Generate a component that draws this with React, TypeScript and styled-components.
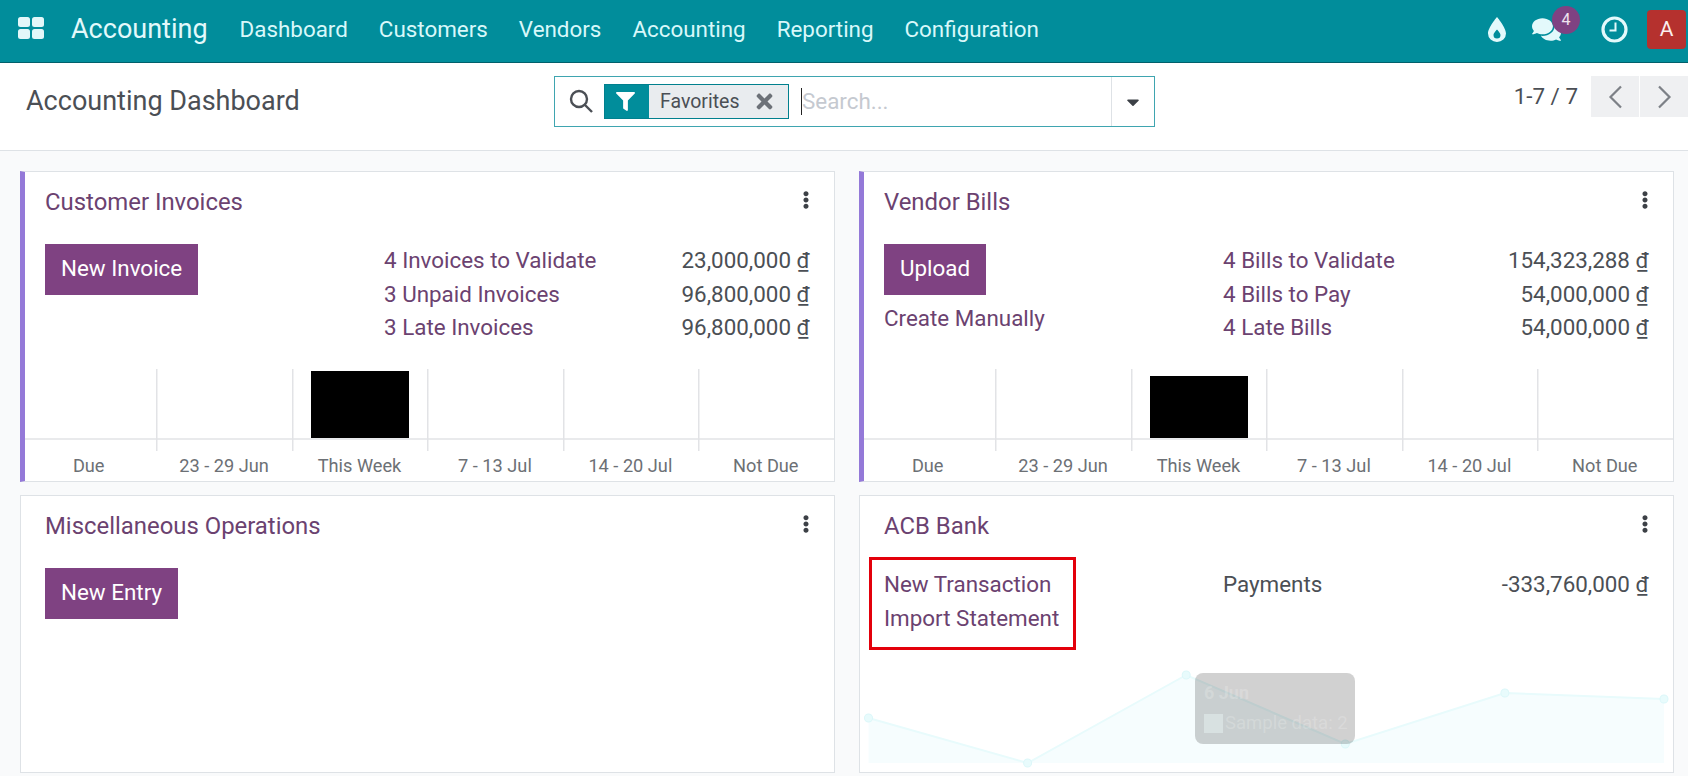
import React from "react";
import styled, { createGlobalStyle } from "styled-components";
import { FaComments, FaEllipsisV, FaFilter, FaTimes, FaCaretDown } from "react-icons/fa";

const GlobalStyle = createGlobalStyle`
  html, body {
    margin: 0;
    padding: 0;
    height: 776px;
    overflow: hidden;
    background: #f9fafb;
    font-family: Roboto, "Liberation Sans", sans-serif;
  }
  * { box-sizing: border-box; }
`;

const TopBar = styled.header`
  height: 63px;
  background: #018d9b;
  border-bottom: 1px solid #01606b;
  display: flex;
  align-items: center;
  padding: 0 2px 4px 18px;
`;

const AppsIcon = styled.svg`
  width: 26px;
  height: 22px;
  margin-right: 27px;
  margin-top: -3px;
  fill: #e3f7f9;
`;

const Brand = styled.div`
  font-size: 27px;
  color: #e3f9fb;
  margin-right: 32px;
`;

const Nav = styled.nav`
  display: flex;
  gap: 31px;
  flex: 1;
`;

const NavItem = styled.span`
  font-size: 22.4px;
  color: #d8f8fa;
`;

const Systray = styled.div`
  display: flex;
  align-items: center;
  color: #e3f9fb;
`;

const ChatWrap = styled.div`
  position: relative;
  display: flex;
  margin: 0 40px 0 26px;
`;

const Badge = styled.span`
  position: absolute;
  left: 20px;
  top: -9px;
  width: 28px;
  height: 28px;
  border-radius: 50%;
  background: #7f4282;
  color: #f0e3f0;
  font-size: 16px;
  display: flex;
  align-items: center;
  justify-content: center;
`;

const Avatar = styled.div`
  width: 39px;
  height: 39px;
  margin-left: 19px;
  border-radius: 4px;
  background: #b5312e;
  color: #fbeeee;
  font-size: 21px;
  display: flex;
  align-items: center;
  justify-content: center;
`;

const ControlPanel = styled.section`
  height: 88px;
  background: #fff;
  border-bottom: 1px solid #dee2e6;
  display: grid;
  grid-template-columns: 554px 601px 1fr;
  padding-top: 13px;
`;

const PageTitle = styled.h1`
  margin: 0;
  padding: 5px 0 0 26px;
  font-size: 27px;
  font-weight: 400;
  line-height: 40px;
  color: #4b4f55;
`;

const SearchBox = styled.div`
  height: 51px;
  border: 1px solid #3fa5b0;
  display: flex;
  align-items: center;
  padding-left: 14px;
  color: #4b4f55;
`;

const SearchGlyph = styled.svg`
  margin-top: -2px;
`;

const Facet = styled.div`
  height: 35px;
  margin-left: 11px;
  display: flex;
  align-items: stretch;
  background: #e9ecef;
  border: 1px solid #01808e;
  width: 185px;
`;

const FacetIcon = styled.span`
  width: 44px;
  padding-right: 3px;
  background: #018d9b;
  color: #fff;
  font-size: 19px;
  display: flex;
  align-items: center;
  justify-content: center;
`;

const FacetLabel = styled.span`
  flex: 1;
  padding-left: 11px;
  font-size: 19.5px;
  line-height: 34px;
  color: #4b4f55;
`;

const FacetClose = styled.span`
  width: 48px;
  color: #6c7178;
  font-size: 23px;
  display: flex;
  align-items: center;
  justify-content: center;
`;

const SearchInput = styled.div`
  flex: 1;
  height: 27px;
  margin-left: 12px;
  border-left: 1px solid #222;
  font-size: 22.4px;
  line-height: 27px;
  color: #c5c9d0;
`;

const SearchToggle = styled.div`
  width: 43px;
  height: 100%;
  border-left: 1px solid #dee2e6;
  color: #3c4046;
  font-size: 20px;
  display: flex;
  align-items: center;
  justify-content: center;
`;

const Pager = styled.div`
  display: flex;
  justify-content: flex-end;
  align-items: flex-start;
`;

const PagerValue = styled.span`
  margin-right: 12px;
  font-size: 22.4px;
  line-height: 40px;
  color: #4b4f55;
`;

const PagerButton = styled.span`
  width: 48px;
  height: 41px;
  margin-left: 1px;
  background: #eff0f2;
  display: flex;
  align-items: center;
  justify-content: center;
`;

const Dashboard = styled.main`
  display: grid;
  grid-template-columns: 1fr 1fr;
  grid-template-rows: 311px 278px;
  gap: 13px 24.5px;
  padding: 20px 14.5px 0 20px;
`;

const Card = styled.article<{ $accent?: boolean }>`
  position: relative;
  display: flex;
  flex-direction: column;
  background: #fff;
  border: 1px solid #dee2e6;
  border-left: ${(p) => (p.$accent ? "5px solid #9479d8" : "1px solid #dee2e6")};
  padding-top: 13px;
`;

const CardHeader = styled.div<{ $accent?: boolean }>`
  display: flex;
  justify-content: space-between;
  height: 59px;
  padding: 0 19px 0 ${(p) => (p.$accent ? "20px" : "24px")};
`;

const CardTitle = styled.h2`
  margin: 0;
  font-size: 23.9px;
  font-weight: 400;
  line-height: 34px;
  color: #6b4270;
`;

const Kebab = styled.span`
  color: #3c4046;
  font-size: 18px;
  line-height: 1;
  padding-top: 6px;
`;

const CardBody = styled.div<{ $accent?: boolean }>`
  display: grid;
  grid-template-columns: 339px 1fr;
  padding: 0 24px 0 ${(p) => (p.$accent ? "20px" : "24px")};
`;

const Actions = styled.div`
  position: relative;
  display: flex;
  flex-direction: column;
  align-items: flex-start;
`;

const PrimaryButton = styled.span`
  height: 51px;
  padding: 0 16px;
  background: #7f4282;
  color: #fff;
  font-size: 22.4px;
  line-height: 49px;
`;

const ActionLink = styled.span`
  font-size: 22.4px;
  line-height: 33.5px;
  color: #6b4270;
`;

const ManualLink = styled(ActionLink)`
  margin-top: 7px;
`;

const Annotation = styled.div`
  position: absolute;
  left: -15px;
  top: -11px;
  width: 207px;
  height: 93px;
  border: 3px solid #e3000b;
`;

const Stats = styled.div`
  display: flex;
  flex-direction: column;
`;

const StatRow = styled.div`
  display: flex;
  justify-content: space-between;
  font-size: 22.4px;
  line-height: 33.5px;
`;

const StatLabel = styled.span<{ $muted?: boolean }>`
  color: ${(p) => (p.$muted ? "#4b4f55" : "#6b4270")};
`;

const StatValue = styled.span`
  color: #4b4f55;
`;

const Dong = styled.span`
  text-decoration: underline;
`;

const BarChart = styled.div`
  margin: auto 0 0 -4px;
  display: grid;
  grid-template-columns: repeat(6, 1fr);
  height: 112px;
`;

const BarColumn = styled.div`
  display: flex;
  flex-direction: column;
`;

const Plot = styled.div<{ $first?: boolean }>`
  height: 82px;
  display: flex;
  align-items: flex-start;
  justify-content: center;
  background:
    linear-gradient(#e2e3e6, #e2e3e6) left top / ${(p) => (p.$first ? "0" : "1.5px")} 100% no-repeat,
    linear-gradient(#e9eaec, #e9eaec) ${(p) => (p.$first ? "4px" : "left")} 69px / 100% 2px no-repeat;
`;

const Bar = styled.div<{ $top: number }>`
  width: 98px;
  height: ${(p) => 69 - p.$top}px;
  margin-top: ${(p) => p.$top}px;
  background: #000;
`;

const BarLabel = styled.div`
  height: 30px;
  text-align: center;
  font-size: 18.2px;
  line-height: 29px;
  color: #6c7075;
`;

const LineChart = styled.div`
  position: absolute;
  left: 0;
  right: 0;
  bottom: 9px;
  height: 100px;
`;

const LineSvg = styled.svg`
  display: block;
  width: 100%;
  height: 100%;
  overflow: visible;
`;

const ChartTooltip = styled.div`
  position: absolute;
  left: 335px;
  top: 10px;
  width: 160px;
  height: 71px;
  padding: 7px 9px;
  border-radius: 8px;
  background: rgba(0, 0, 0, 0.18);
  color: rgba(255, 255, 255, 0.2);
`;

const TooltipDate = styled.div`
  font-size: 18px;
  font-weight: 700;
  line-height: 25px;
`;

const TooltipRow = styled.div`
  display: flex;
  align-items: center;
  gap: 2px;
  margin-top: 6px;
  font-size: 18.5px;
  line-height: 25px;
  white-space: nowrap;
`;

const TooltipSwatch = styled.span`
  flex: none;
  width: 19px;
  height: 19px;
  background: rgba(235, 246, 247, 0.45);
`;

const Chevron = ({ dir }: { dir: "left" | "right" }) => (
  <svg width="15" height="24" viewBox="0 0 15 24" fill="none" stroke="#7d8187" strokeWidth="2.2">
    <path d={dir === "left" ? "M13 1.5 2.5 12 13 22.5" : "M2 1.5 12.5 12 2 22.5"} />
  </svg>
);

const points = [
  [8.5, 55],
  [167.5, 100],
  [326, 12],
  [485, 81],
  [644.5, 30],
  [803.5, 36],
];
const linePath = points.map(([x, y]) => `${x},${y}`).join(" ");

const weeks = ["Due", "23 - 29 Jun", "This Week", "7 - 13 Jul", "14 - 20 Jul", "Not Due"];

const Bars = ({ top }: { top: number }) => (
  <BarChart>
    {weeks.map((week, i) => (
      <BarColumn key={week}>
        <Plot $first={i === 0}>{i === 2 && <Bar $top={top} />}</Plot>
        <BarLabel>{week}</BarLabel>
      </BarColumn>
    ))}
  </BarChart>
);

const Amount = ({ value }: { value: string }) => (
  <StatValue>
    {value} <Dong>₫</Dong>
  </StatValue>
);

const Menu = () => (
  <Kebab>
    <FaEllipsisV />
  </Kebab>
);

export default function App() {
  return (
    <>
      <GlobalStyle />
      <TopBar>
        <AppsIcon viewBox="0 0 26 22">
          <rect x="0" y="0" width="12" height="10" rx="2.5" />
          <rect x="14" y="0" width="12" height="10" rx="2.5" />
          <rect x="0" y="12" width="12" height="10" rx="2.5" />
          <rect x="14" y="12" width="12" height="10" rx="2.5" />
        </AppsIcon>
        <Brand>Accounting</Brand>
        <Nav>
          <NavItem>Dashboard</NavItem>
          <NavItem>Customers</NavItem>
          <NavItem>Vendors</NavItem>
          <NavItem>Accounting</NavItem>
          <NavItem>Reporting</NavItem>
          <NavItem>Configuration</NavItem>
        </Nav>
        <Systray>
          <svg width="18" height="25" viewBox="0 0 18 25" fill="#e3f9fb" fillRule="evenodd">
            <path d="M9 0C9 0 0 10.5 0 16.5a9 8.5 0 0 0 18 0C18 10.5 9 0 9 0ZM9 12.5c0 0-3.5 3.5-3.5 5.5a3.5 3.5 0 0 0 7 0C12.5 16 9 12.5 9 12.5Z" />
          </svg>
          <ChatWrap>
            <FaComments size={29} />
            <Badge>4</Badge>
          </ChatWrap>
          <svg width="27" height="27" viewBox="0 0 27 27" fill="none" stroke="#e3f9fb" strokeWidth="3.2">
            <circle cx="13.5" cy="13.5" r="11.5" />
            <path d="M14.5 6.5v8h-6" strokeWidth="2" />
          </svg>
          <Avatar>A</Avatar>
        </Systray>
      </TopBar>
      <ControlPanel>
        <PageTitle>Accounting Dashboard</PageTitle>
        <SearchBox>
          <SearchGlyph width="24" height="24" viewBox="0 0 24 24" fill="none" stroke="#4b4f55" strokeWidth="2.4">
            <circle cx="10" cy="10" r="8" />
            <path d="m16 16 7 7" />
          </SearchGlyph>
          <Facet>
            <FacetIcon>
              <FaFilter />
            </FacetIcon>
            <FacetLabel>Favorites</FacetLabel>
            <FacetClose>
              <FaTimes />
            </FacetClose>
          </Facet>
          <SearchInput>Search...</SearchInput>
          <SearchToggle>
            <FaCaretDown />
          </SearchToggle>
        </SearchBox>
        <Pager>
          <PagerValue>1-7 / 7</PagerValue>
          <PagerButton>
            <Chevron dir="left" />
          </PagerButton>
          <PagerButton>
            <Chevron dir="right" />
          </PagerButton>
        </Pager>
      </ControlPanel>
      <Dashboard>
        <Card $accent>
          <CardHeader $accent>
            <CardTitle>Customer Invoices</CardTitle>
            <Menu />
          </CardHeader>
          <CardBody $accent>
            <Actions>
              <PrimaryButton>New Invoice</PrimaryButton>
            </Actions>
            <Stats>
              <StatRow>
                <StatLabel>4 Invoices to Validate</StatLabel>
                <Amount value="23,000,000" />
              </StatRow>
              <StatRow>
                <StatLabel>3 Unpaid Invoices</StatLabel>
                <Amount value="96,800,000" />
              </StatRow>
              <StatRow>
                <StatLabel>3 Late Invoices</StatLabel>
                <Amount value="96,800,000" />
              </StatRow>
            </Stats>
          </CardBody>
          <Bars top={2} />
        </Card>
        <Card $accent>
          <CardHeader $accent>
            <CardTitle>Vendor Bills</CardTitle>
            <Menu />
          </CardHeader>
          <CardBody $accent>
            <Actions>
              <PrimaryButton>Upload</PrimaryButton>
              <ManualLink>Create Manually</ManualLink>
            </Actions>
            <Stats>
              <StatRow>
                <StatLabel>4 Bills to Validate</StatLabel>
                <Amount value="154,323,288" />
              </StatRow>
              <StatRow>
                <StatLabel>4 Bills to Pay</StatLabel>
                <Amount value="54,000,000" />
              </StatRow>
              <StatRow>
                <StatLabel>4 Late Bills</StatLabel>
                <Amount value="54,000,000" />
              </StatRow>
            </Stats>
          </CardBody>
          <Bars top={7} />
        </Card>
        <Card>
          <CardHeader>
            <CardTitle>Miscellaneous Operations</CardTitle>
            <Menu />
          </CardHeader>
          <CardBody>
            <Actions>
              <PrimaryButton>New Entry</PrimaryButton>
            </Actions>
          </CardBody>
        </Card>
        <Card>
          <CardHeader>
            <CardTitle>ACB Bank</CardTitle>
            <Menu />
          </CardHeader>
          <CardBody>
            <Actions>
              <ActionLink>New Transaction</ActionLink>
              <ActionLink>Import Statement</ActionLink>
              <Annotation />
            </Actions>
            <Stats>
              <StatRow>
                <StatLabel $muted>Payments</StatLabel>
                <Amount value="-333,760,000" />
              </StatRow>
            </Stats>
          </CardBody>
          <LineChart>
            <LineSvg viewBox="0 0 812 100" preserveAspectRatio="none">
              <polygon points={`8.5,100 ${linePath} 803.5,100`} fill="#f6fdfe" />
              <polyline points={linePath} fill="none" stroke="#e8fbfc" strokeWidth="2" />
              {points.map(([x, y]) => (
                <circle key={x} cx={x} cy={y} r="4" fill="#e8fbfc" stroke="#dcf7f9" />
              ))}
            </LineSvg>
            <ChartTooltip>
              <TooltipDate>6 Jun</TooltipDate>
              <TooltipRow>
                <TooltipSwatch />
                Sample data: 2
              </TooltipRow>
            </ChartTooltip>
          </LineChart>
        </Card>
      </Dashboard>
    </>
  );
}
